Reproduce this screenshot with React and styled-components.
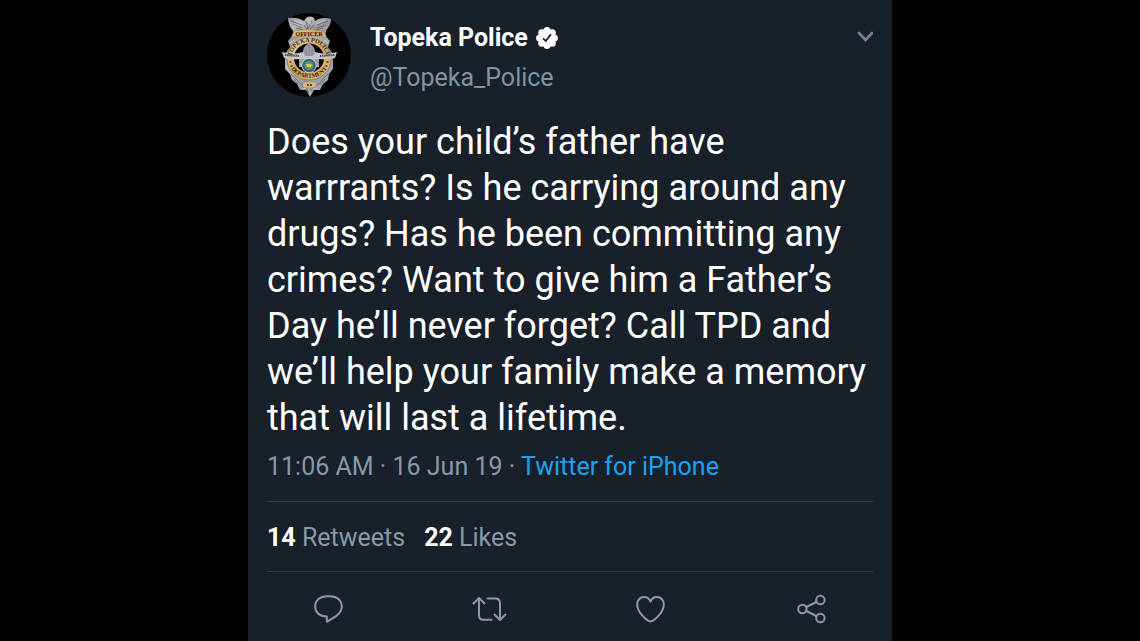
import React from 'react'
import styled, { createGlobalStyle } from 'styled-components'

const tweet = {
     name: 'Topeka Police',
     handle: '@Topeka_Police',
     text: 'Does your child’s father have warrrants? Is he carrying around any drugs? Has he been committing any crimes? Want to give him a Father’s Day he’ll never forget? Call TPD and we’ll help your family make a memory that will last a lifetime.',
     date: '11:06 AM · 16 Jun 19',
     source: 'Twitter for iPhone',
     retweets: 14,
     likes: 22,
}

const BadgeAvatar = () => (
     <Avatar viewBox="0 0 84 84" role="img" aria-label="Topeka Police badge">
          <defs>
               <linearGradient id="silver" x1="0" y1="0" x2="1" y2="1">
                    <stop offset="0" stopColor="#85898f" />
                    <stop offset="0.3" stopColor="#b9bcc0" />
                    <stop offset="0.6" stopColor="#93979d" />
                    <stop offset="1" stopColor="#b3b6ba" />
               </linearGradient>
               <linearGradient id="gold" x1="0" y1="0" x2="1" y2="1">
                    <stop offset="0" stopColor="#f0dcae" />
                    <stop offset="0.5" stopColor="#d0a360" />
                    <stop offset="1" stopColor="#e3bd7c" />
               </linearGradient>
               <path id="arcTop" d="M24.5 46 C25 23 59 23 59.5 46" />
               <path id="arcBottom" d="M22 49 C24 70 60 70 62 49" />
          </defs>
          <circle cx="42" cy="42" r="42" fill="#000" />

          {/* eagle */}
          <path d="M21 5 C27 4 33 5 37 8 L39 5 C41 3 45 3 47 5 L48 8 C52 5 58 4 64 6 C64 11 61 15 59 18 L58 24 L26 24 L26 18 C23 14 21 10 21 5 Z" fill="url(#silver)" />
          <path d="M24 8 L35 12 M26 11 L35 15 M29 15 L36 17 M61 8 L50 12 M59 12 L50 15 M56 15 L49 17 M39 8 L41 16 L45 8 M37 12 L41 18 L47 12" stroke="#5f636a" strokeWidth="0.8" fill="none" />
          <path d="M27 7 L36 11 M58 7 L49 11 M42 6 L44 12" stroke="#d4d6d8" strokeWidth="0.8" fill="none" />

          {/* shield */}
          <path d="M26 22 L58 22 L63 28 L61 34 L66 41 L66 56 L62 61 L61 67 L56 71 L53 77 L47 77 L43 84 L39 77 L33 77 L30 71 L25 67 L23 61 L18 56 L18 41 L23 34 L21 28 Z" fill="url(#silver)" />
          <path d="M24 61 L30 67 L34 71 L38 73 L42 80 L47 73 L52 71 L56 66 L61 61 M27 66 L31 71 M58 66 L54 71 M35 73 L38 76 M49 73 L47 76" stroke="#666a70" strokeWidth="0.8" fill="none" />
          <path d="M23 30 L27 27 M61 30 L57 27 M35 75 L39 76 M50 75 L46 76 M43 77 V82" stroke="#dadbdd" strokeWidth="0.8" />

          <ellipse cx="42" cy="46" rx="22" ry="21" fill="url(#gold)" stroke="#80643a" strokeWidth="0.6" />
          <ellipse cx="42" cy="45" rx="15" ry="14.5" fill="#06080c" />
          <path d="M27 18 Q42 15 57 18 L60 25 Q42 21 24 25 Z" fill="url(#gold)" stroke="#80643a" strokeWidth="0.4" />

          {/* capitol dome and wings */}
          <path d="M42 25 L43 31 C47 33 48 36 48 40 L52 45 L52 54 L32 54 L32 45 L36 40 C36 36 37 33 41 31 Z" fill="#9b9fa6" />
          <path d="M39 35 V48 M42 32 V48 M45 35 V48" stroke="#7b7f86" strokeWidth="0.8" />
          <path d="M15 39 Q26 42 36 39 L38 43 L46 43 L48 39 Q59 42 70 39 L68 45 Q58 47 51 46 L33 46 Q26 47 17 45 Z" fill="#c4c6c9" />
          <path d="M18 42 L32 43 M53 43 L68 42" stroke="#43464b" strokeWidth="2" strokeDasharray="1.4 0.7" />

          <circle cx="42" cy="52.5" r="7.6" fill="#e9e2bd" />
          <circle cx="42" cy="52.5" r="6.8" fill="#2c609b" />
          <circle cx="42" cy="52.5" r="4.6" fill="#669c4f" />
          <path d="M39 51 H45 L44 54 H40 Z" fill="#d9c851" />

          <BadgeText x="42" y="22.6" textAnchor="middle">OFFICER</BadgeText>
          <BadgeText><textPath href="#arcTop" startOffset="50%" textAnchor="middle">TOPEKA POLICE</textPath></BadgeText>
          <BadgeText><textPath href="#arcBottom" startOffset="50%" textAnchor="middle">DEPARTMENT</textPath></BadgeText>
          <path d="M22.5 49 h2 M23.5 53 h2 M59.5 49 h2 M58.5 53 h2" stroke="#3d2d17" strokeWidth="1.6" />

          <rect x="36" y="69.5" width="13" height="5" rx="2" fill="#dfb978" />
          <path d="M40 72 H45" stroke="#5b4322" strokeWidth="2" strokeDasharray="2 1" />
     </Avatar>
)

const VerifiedIcon = () => (
     <svg width="22" height="22" viewBox="0 0 22 22" role="img" aria-label="Verified account">
          <g fill="#fff">
               <circle cx="11" cy="11" r="8.6" />
               <circle cx="11" cy="3.7" r="3.6" />
               <circle cx="16.2" cy="5.8" r="3.6" />
               <circle cx="18.3" cy="11" r="3.6" />
               <circle cx="16.2" cy="16.2" r="3.6" />
               <circle cx="11" cy="18.3" r="3.6" />
               <circle cx="5.8" cy="16.2" r="3.6" />
               <circle cx="3.7" cy="11" r="3.6" />
               <circle cx="5.8" cy="5.8" r="3.6" />
          </g>
          <path d="M7 11.4 L9.8 14 L15 7.2" fill="none" stroke="#18202a" strokeWidth="1.8" />
     </svg>
)

const ReplyIcon = () => (
     <ActionSvg viewBox="0 0 36 28">
          <path d="M16 1.2 H19 C26 1.2 30.8 5.2 30.8 11.5 C30.8 15.8 28.5 18.6 25 21.2 L15.8 26.8 V21.4 C8.5 21.4 4.2 17.4 4.2 11.5 C4.2 5.2 9 1.2 16 1.2 Z" />
     </ActionSvg>
)

const RetweetIcon = () => (
     <ActionSvg viewBox="0 0 36 28">
          <path d="M1.5 8.5 L7 3 L12.5 8.5 M7 3.5 V20.5 Q7 24.8 11.5 24.8 H19.5" />
          <path d="M33.5 19.5 L28 25 L22.5 19.5 M28 24.5 V8 Q28 3.4 23.5 3.4 H15.5" />
     </ActionSvg>
)

const LikeIcon = () => (
     <ActionSvg viewBox="0 0 36 28">
          <path d="M17.5 26.5 C13.5 25.5 4.2 17.5 4.2 9.5 C4.2 5 7.2 1.9 11 1.9 C14.5 1.9 16.5 4 17.5 6.6 C18.5 4 20.5 1.9 24 1.9 C27.8 1.9 30.8 5 30.8 9.5 C30.8 17.5 21.5 25.5 17.5 26.5 Z" />
     </ActionSvg>
)

const ShareIcon = () => (
     <ActionSvg viewBox="0 0 36 28">
          <circle cx="8.4" cy="14" r="4.2" />
          <circle cx="26.4" cy="5" r="4.2" />
          <circle cx="26.4" cy="23" r="4.2" />
          <path d="M12.4 12 L22.4 7 M12.4 16 L22.4 21" />
     </ActionSvg>
)

const actions = [
     { label: 'Reply', Icon: ReplyIcon },
     { label: 'Retweet', Icon: RetweetIcon },
     { label: 'Like', Icon: LikeIcon },
     { label: 'Share', Icon: ShareIcon },
]

const App = () => {
     return (
          <>
               <GlobalStyle />
               <Card>
                    <Header>
                         <BadgeAvatar />
                         <Author>
                              <Name>{tweet.name} <VerifiedIcon /></Name>
                              <Handle>{tweet.handle}</Handle>
                         </Author>
                         <MenuButton type="button" aria-label="More">
                              <svg width="16" height="12" viewBox="0 0 16 12" fill="none">
                                   <path d="M2 2 L8.5 9 L15 2" stroke="#6f8292" strokeWidth="2.6" strokeLinecap="round" />
                              </svg>
                         </MenuButton>
                    </Header>

                    <TweetText>{tweet.text}</TweetText>
                    <Meta>{tweet.date} · <a href="#source">{tweet.source}</a></Meta>

                    <Stats>
                         <span><strong>{tweet.retweets}</strong> Retweets</span>
                         <span><strong>{tweet.likes}</strong> Likes</span>
                    </Stats>

                    <Actions>
                         {
                              actions.map(({ label, Icon }) => (
                                   <ActionButton key={label} type="button" aria-label={label}>
                                        <Icon />
                                   </ActionButton>
                              ))
                         }
                    </Actions>
               </Card>
          </>
     )
}

const GlobalStyle = createGlobalStyle`
     * {
          box-sizing: border-box;
     }

     body {
          margin: 0;
          background-color: #000;
          font-family: Roboto, "Liberation Sans", sans-serif;
     }
`

const Card = styled.article`
     width: 100%;
     max-width: 644px;
     min-height: 100vh;
     margin: 0 auto;
     padding-top: 13px;
     background-color: #18202a;
     color: #8699a6;
     font-size: 25px;
     line-height: 40px;
`

const Header = styled.header`
     display: flex;
     align-items: flex-start;
     gap: 19px;
     padding: 0 19px;
`

const Avatar = styled.svg`
     width: 84px;
     height: 84px;
     flex-shrink: 0;
`

const BadgeText = styled.text`
     font-family: "Liberation Serif", serif;
     font-size: 6px;
     font-weight: 700;
     fill: #33240f;
`

const Author = styled.div`
     flex: 1;
     padding-top: 5px;
`

const Name = styled.div`
     display: flex;
     align-items: center;
     gap: 8px;
     color: #fff;
     font-weight: 700;
`

const Handle = styled.div`
     color: #7f93a1;
`

const MenuButton = styled.button`
     display: flex;
     margin-top: 18px;
     padding: 0;
     border: 0;
     background: none;
     cursor: pointer;
`

const TweetText = styled.p`
     margin: 21px 0 6px;
     padding: 0 19px;
     color: #fff;
     font-size: 36px;
     line-height: 46px;
`

const Meta = styled.div`
     padding: 0 19px;

     a {
          color: #1da1f2;
          text-decoration: none;
     }
`

const Stats = styled.div`
     display: flex;
     gap: 19px;
     margin: 14px 19px 0;
     padding: 16px 0 13px;
     border-top: 1px solid #2f3c46;
     border-bottom: 1px solid #2f3c46;

     strong {
          color: #fff;
     }
`

const Actions = styled.div`
     display: grid;
     grid-template-columns: repeat(4, 1fr);
     padding: 23px 0 16px;
`

const ActionButton = styled.button`
     display: flex;
     justify-content: center;
     padding: 0;
     border: 0;
     background: none;
     cursor: pointer;
`

const ActionSvg = styled.svg`
     width: 36px;
     height: 28px;
     overflow: visible;
     fill: none;
     stroke: #8a9ba8;
     stroke-width: 2;
     stroke-linecap: round;
     stroke-linejoin: round;
`

export default App
